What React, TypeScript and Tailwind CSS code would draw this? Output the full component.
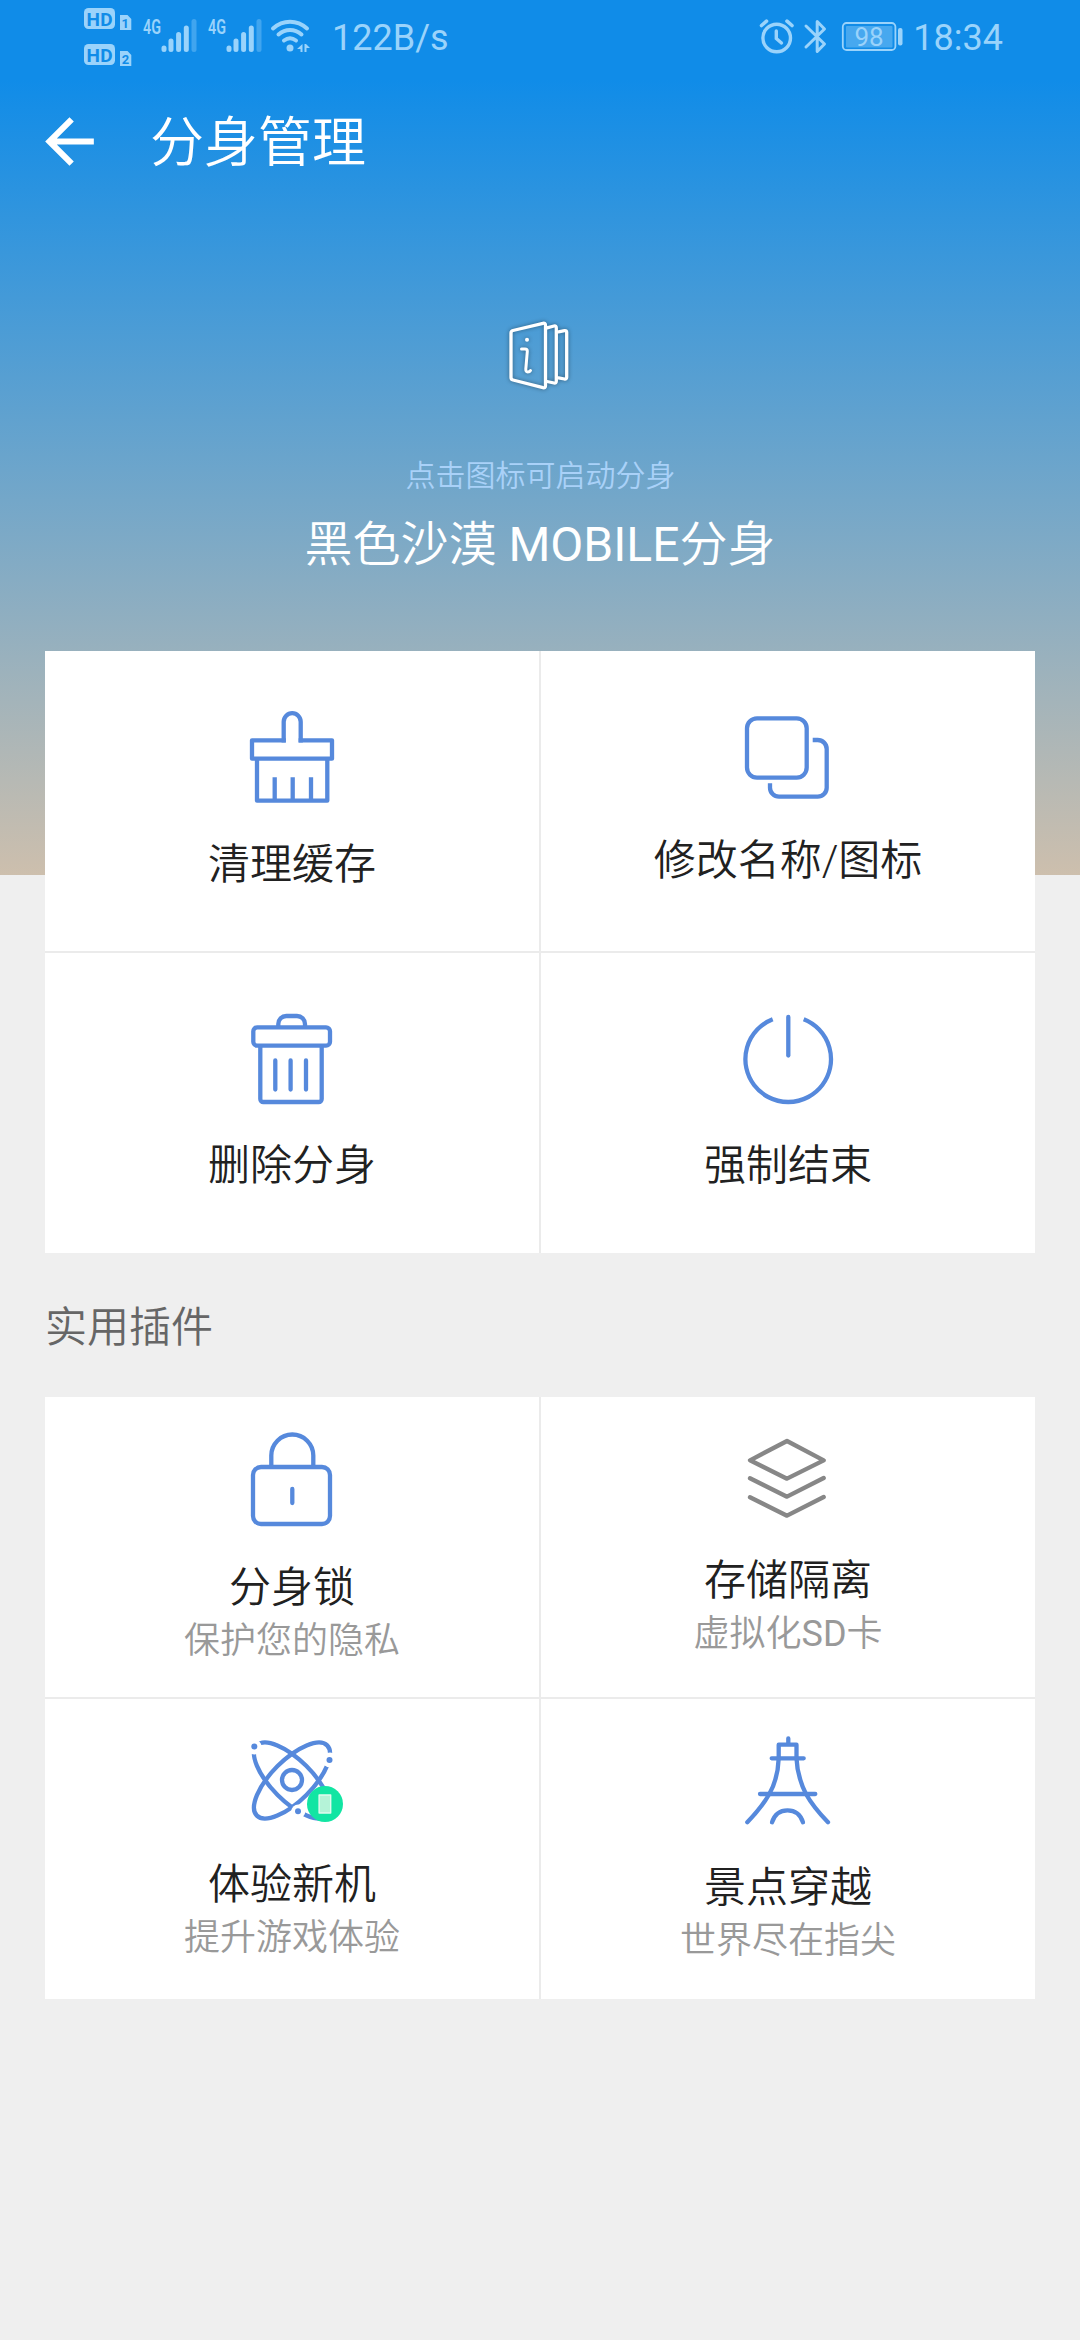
import type { ReactNode } from "react";

type Tile = {
  title: string;
  sub?: ReactNode;
  icon: ReactNode;
  // vertical distance between icon box and title
  gap: string;
};

function TileIcon({ children, color = "#5689dc" }: { children: ReactNode; color?: string }) {
  return (
    <svg
      width="120"
      height="110"
      viewBox="0 0 120 110"
      fill="none"
      stroke={color}
      strokeWidth="4.3"
      strokeLinejoin="round"
      className="block shrink-0"
    >
      {children}
    </svg>
  );
}

const manageTiles: Tile[] = [
  {
    title: "清理缓存",
    gap: "mt-[31px]",
    icon: (
      <TileIcon>
        <path d="M51.7 42.4V21.7a8.5 8.5 0 0 1 17 0v20.7" />
        <path d="M53.8 40.3H20v18.4h80V40.3H66.6M25 58.7v42h70.3v-42" />
        <path d="M42.7 77.3v22M60.7 77.3v22M79 77.3v22" />
      </TileIcon>
    ),
  },
  {
    title: "修改名称/图标",
    gap: "mt-[27px]",
    icon: (
      <TileIcon>
        <rect x="19" y="18.3" width="59.7" height="59.3" rx="10" />
        <path d="M84.7 40h5a9 9 0 0 1 9 9v38.7a9 9 0 0 1-9 9H51a9 9 0 0 1-9-9v-4.4" />
      </TileIcon>
    ),
  },
  {
    title: "删除分身",
    gap: "mt-[30px]",
    icon: (
      <TileIcon>
        <path d="M46.3 25.5V22a8 8 0 0 1 8-8H65a8 8 0 0 1 8 8v3.5" />
        <rect x="21.3" y="25.3" width="76.7" height="18.4" rx="4" />
        <path d="M28.3 43.7V97a3 3 0 0 0 3 3h55.4a3 3 0 0 0 3-3V43.7" />
        <path d="M43.3 58.5v29M58.6 58.5v29M74 58.5v29" strokeLinecap="round" />
      </TileIcon>
    ),
  },
  {
    title: "强制结束",
    gap: "mt-[30px]",
    icon: (
      <TileIcon>
        <path d="M44.7 17.3a42.8 42.8 0 1 0 31 0" />
        <path d="M60.3 15v38.5" strokeLinecap="round" />
      </TileIcon>
    ),
  },
];

const pluginTiles: Tile[] = [
  {
    title: "分身锁",
    sub: "保护您的隐私",
    gap: "mt-[33px]",
    icon: (
      <TileIcon>
        <path d="M39.3 46V34.5a21 21 0 0 1 42 0V46" />
        <rect x="21" y="46" width="77" height="57" rx="8" />
        <path d="M60.3 68v14" strokeLinecap="round" />
      </TileIcon>
    ),
  },
  {
    title: "存储隔离",
    sub: (
      <>
        虚拟化<span className="font-normal">SD</span>卡
      </>
    ),
    gap: "mt-[26px]",
    icon: (
      <TileIcon color="#878787">
        <path d="M59 20 22 39.3l37 18.4 36.7-18.4z" />
        <path d="m22 57.3 37 18.4L95.7 57M22 76.3l37 18.4L95.7 76" strokeLinecap="round" />
      </TileIcon>
    ),
  },
  {
    title: "体验新机",
    sub: "提升游戏体验",
    gap: "mt-[28px]",
    icon: (
      <TileIcon>
        <ellipse cx="60" cy="57.5" rx="49.7" ry="20.4" transform="rotate(45 60 57.5)" />
        <ellipse cx="60" cy="57.5" rx="49.7" ry="20.4" transform="rotate(-45 60 57.5)" />
        <g stroke="none" fill="#fff">
          <circle cx="22.3" cy="24" r="7.4" />
          <circle cx="98" cy="37" r="7.4" />
          <circle cx="66.3" cy="88.4" r="7" />
        </g>
        <g stroke="none" fill="#5689dc">
          <circle cx="22.3" cy="23.5" r="3" />
          <circle cx="97.5" cy="37" r="3" />
          <circle cx="66" cy="88.2" r="3" />
        </g>
        <circle cx="60" cy="57" r="10" />
        <circle cx="93" cy="81" r="18" fill="#12e5a3" stroke="none" />
        <rect x="87.1" y="72" width="11.6" height="18" fill="#b5f3d8" stroke="#e0fbee" strokeWidth="1.4" />
      </TileIcon>
    ),
  },
  {
    title: "景点穿越",
    sub: "世界尽在指尖",
    gap: "mt-[31px]",
    icon: (
      <TileIcon>
        <g strokeLinecap="round">
          <path d="M60.3 15.5v6M50.7 35.3V21.7h17.8v13.6" />
          <path d="M43.7 35.3h32M32 71h55.3" />
          <path d="M50.7 35.3C50.2 49 47.5 60 41.3 71c-6 10.7-13.5 19.5-22 28.3" />
          <path d="M68.5 35.3C69 49 72.5 60 78 71c5.5 10 13.5 19.5 22 28.3" />
          <path d="M44 99.3c2.500-8 8.500-12 15.500-12s13 4 15.500 12" />
        </g>
      </TileIcon>
    ),
  },
];

function TileGrid({ tiles, pad }: { tiles: Tile[]; pad: string }) {
  return (
    <div className="grid grid-cols-2 gap-[2px] bg-[#ebebeb]">
      {tiles.map((t) => (
        <div key={t.title} className={`flex h-[300px] flex-col items-center bg-white ${pad}`}>
          {t.icon}
          <div className={`${t.gap} text-[42px] leading-[48px] text-[#212121]`}>{t.title}</div>
          {t.sub && <div className="mt-[7px] text-[36px] leading-[44px] text-[#999999]">{t.sub}</div>}
        </div>
      ))}
    </div>
  );
}

function Signal({ x }: { x: number }) {
  return (
    <g transform={`translate(${x} 0)`}>
      <text x="0" y="34" fontSize="20" fontWeight="600" textLength="18" lengthAdjust="spacingAndGlyphs">4G</text>
      <g stroke="#9ad3fb" strokeWidth="5" strokeLinecap="round">
        <path d="M21 48v1.5M28 41v8.5M35.6 34.5v15M43.3 28v21.5" />
        <path d="M51 21.5v28" strokeOpacity=".35" />
      </g>
    </g>
  );
}

function StatusBar() {
  return (
    <div className="flex h-[76px] items-center justify-between pr-[77px] pl-[84px] text-[#9ad3fb]">
      <div className="flex items-center">
        <svg width="228" height="76" viewBox="84 0 228 76" fill="#9ad3fb" className="block">
          <rect x="84" y="8" width="31" height="21" rx="4.5" />
          <rect x="84" y="44" width="31" height="21" rx="4.5" />
          <path d="M120 15h7.5l3.800 4v11H120zM120 51h7.5l3.800 4v11H120z" />
          <g fill="#108ce8" fontWeight="700">
            <text x="86.5" y="25.5" fontSize="19" textLength="26">HD</text>
            <text x="86.5" y="61.5" fontSize="19" textLength="26">HD</text>
            <text x="125.2" y="27.5" fontSize="13" textAnchor="middle">1</text>
            <text x="125.5" y="63.5" fontSize="13" textAnchor="middle">2</text>
          </g>
          <Signal x={143} />
          <Signal x={208} />
          <g fill="none" stroke="#9ad3fb" strokeWidth="4" strokeLinecap="round">
            <path d="M273 28.5c10-9 24-9 34 0M278.500 34.500c7-6 16-6 23 0M284 40.500c4-3 8-3 12 0" />
          </g>
          <circle cx="290" cy="48" r="3.5" />
          <path d="m302.500 44-5.500 5h3.500v3h2zM304.500 52v-8h1.500l4 4h-3.500v4z" />
        </svg>
        <span className="ml-[20px] text-[36px] leading-none">122B/s</span>
      </div>
      <div className="flex items-center">
        <svg width="146" height="76" viewBox="758 0 146 76" fill="none" stroke="#9ad3fb" strokeLinecap="round" className="block">
          <circle cx="776.7" cy="38" r="13.8" strokeWidth="3.4" />
          <path d="M776.300 31v7.500l5.200 4.500" strokeWidth="3.4" />
          <path d="m761.500 25.500 5-4.300M787 21.200l5 4.300" strokeWidth="3.6" />
          <path d="m806 26 18.500 18-7.300 7.500V21.500l7.300 7.500L806 47" strokeWidth="3" strokeLinejoin="round" />
          <rect x="842.8" y="23" width="52.6" height="27" rx="3.8" strokeWidth="1.8" />
          <rect x="846" y="26" width="46.5" height="21.5" rx="1" fill="#9ad3fb" fillOpacity=".4" stroke="none" />
          <rect x="898" y="28" width="4.5" height="17.5" rx="2" fill="#9ad3fb" stroke="none" />
          <text x="869" y="46" fontSize="26" textAnchor="middle" fill="#9ad3fb" stroke="none">98</text>
        </svg>
        <span className="ml-[9px] text-[36px] leading-none">18:34</span>
      </div>
    </div>
  );
}

function BookIcon() {
  return (
    <svg
      width="80"
      height="80"
      viewBox="0 0 80 80"
      fill="none"
      stroke="#fff"
      strokeWidth="3.3"
      strokeLinejoin="round"
      strokeLinecap="round"
      className="block drop-shadow-[0_0_2px_rgba(0,0,0,0.4)]"
    >
      <path d="M13 15.5 43 8.3q2.500-.5 2.500 2v60.400q0 2.500-2.500 2L13 65q-2-.5-2-2.500V18q0-2 2-2.500z" />
      <path d="m47 12.8 7-1.800q2.300-.5 2.300 2v53q0 2.500-2.300 2l-7-1.500" />
      <path d="m58.5 16.8 6-1.100q2.200-.4 2.200 1.600v45q0 2-2.200 1.700l-6-1.200" />
      <circle cx="27" cy="24.7" r="2" fill="#fff" stroke="none" />
      <path d="M21.500 34H25q2.500 0 2.300 2.500L25.800 54q-.2 3 2 3 1.800 0 2.700-1.500" strokeWidth="3" />
    </svg>
  );
}

export default function App() {
  return (
    <div className="h-[2340px] w-[1080px] overflow-hidden bg-[#efefef] bg-[linear-gradient(to_bottom,#108ce8_80px,#cdbfad_875px)] bg-[length:100%_875px] bg-no-repeat font-[Roboto,'Noto_Sans_CJK_SC',sans-serif]">
      <StatusBar />

      <header className="flex h-[131px] items-center pl-[33px] text-white">
        <svg width="73" height="73" viewBox="0 0 24 24" fill="currentColor" className="block">
          <path d="M20 11H7.83l5.590-5.590L12 4l-8 8 8 8 1.410-1.410L7.830 13H20v-2z" />
        </svg>
        <h1 className="mt-[4px] ml-[44px] text-[54px] leading-[60px] font-[350]">分身管理</h1>
      </header>

      <section className="flex h-[444px] flex-col items-center pt-[108px]">
        <BookIcon />
        <p className="mt-[63px] pl-[1px] text-[30px] leading-[36px] font-[350] text-[#a9d1f8]">点击图标可启动分身</p>
        <h2 className="mt-[24px] text-[48px] leading-[54px] text-white">
          <span className="font-[350]">黑色沙漠</span> MOBILE<span className="font-[350]">分身</span>
        </h2>
      </section>

      <main className="px-[45px] font-[350]">
        <TileGrid tiles={manageTiles} pad="pt-[49px]" />
        <h3 className="flex h-[144px] items-center pt-[5px] text-[42px] leading-[48px] text-[#666666]">实用插件</h3>
        <TileGrid tiles={pluginTiles} pad="pt-[24px]" />
      </main>
    </div>
  );
}
